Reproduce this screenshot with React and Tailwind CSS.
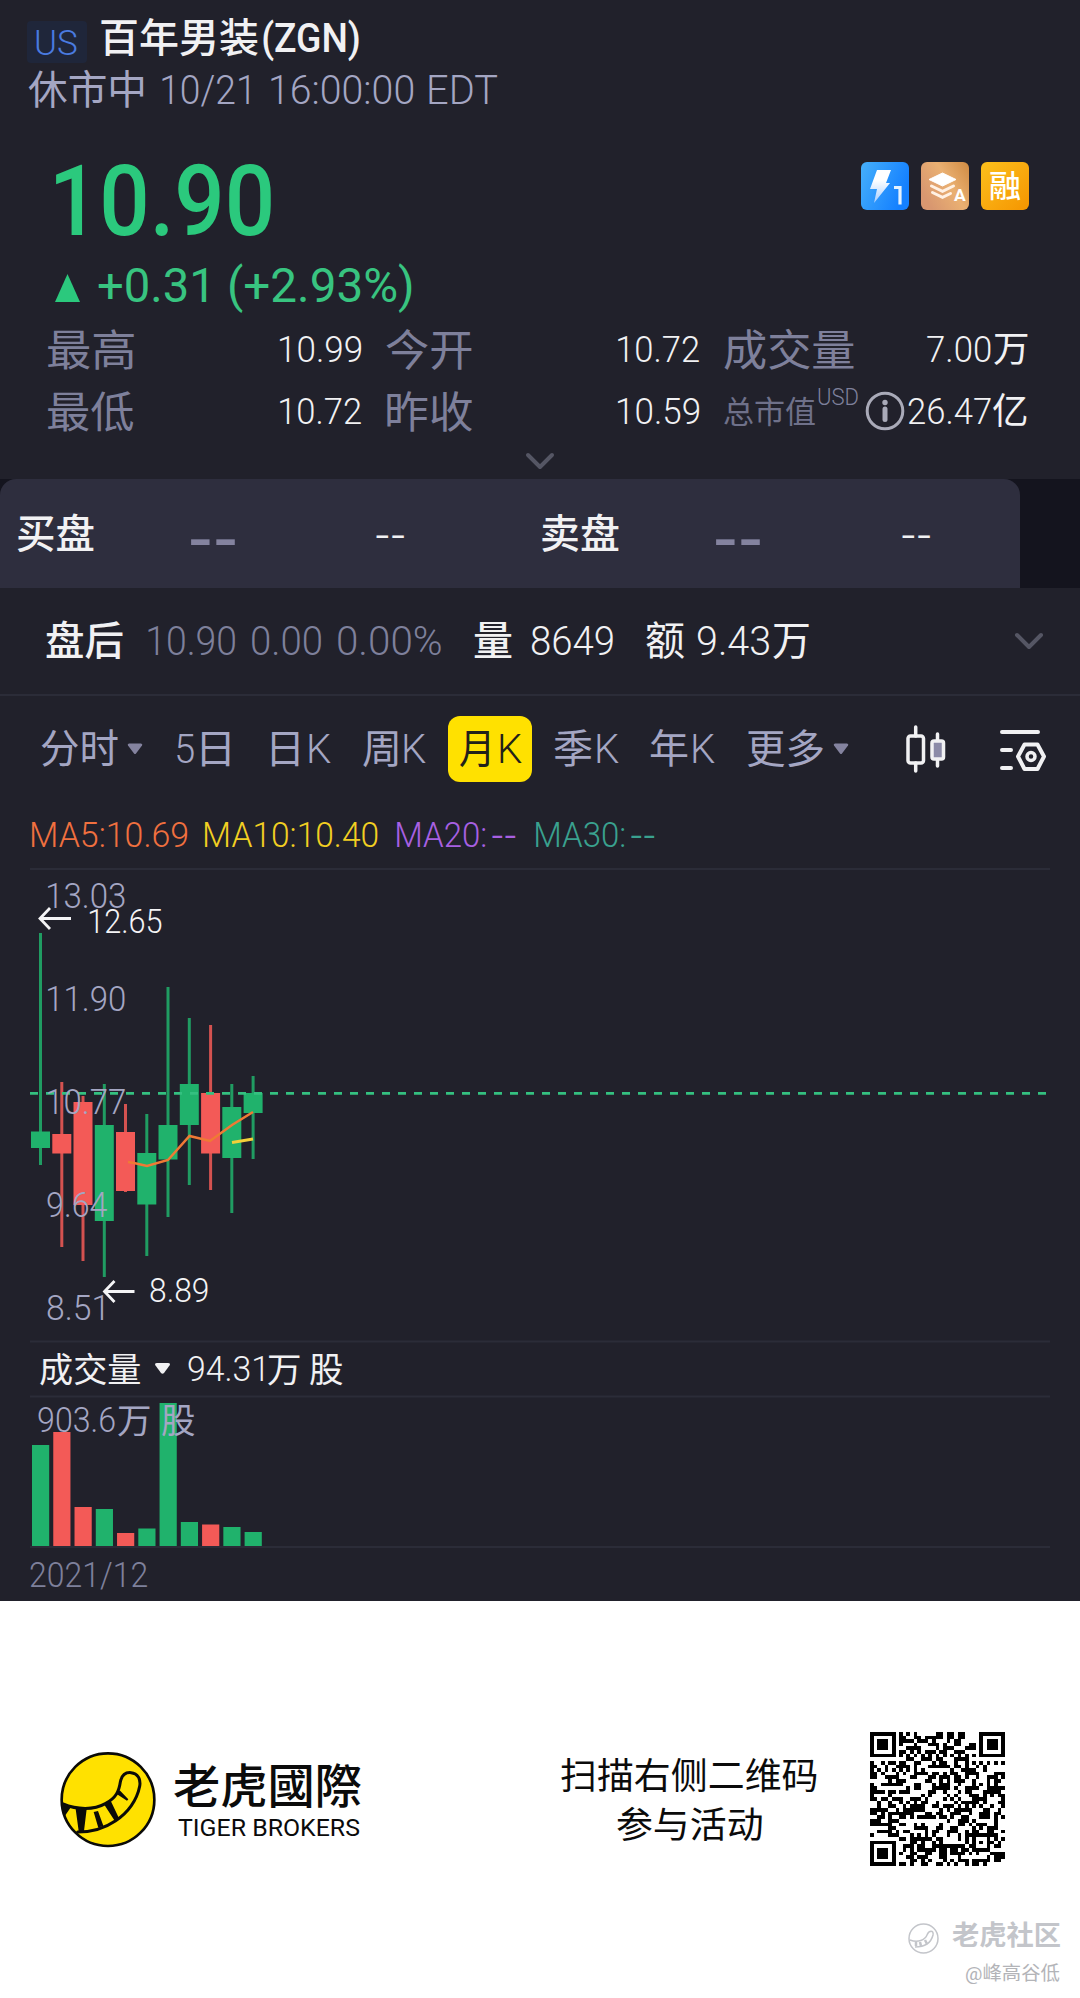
import { useLayoutEffect, useRef } from 'react';

let ctx;
const ink = (el, text) => {
  ctx = ctx || document.createElement('canvas').getContext('2d');
  const s = getComputedStyle(el);
  ctx.font = `${s.fontWeight} ${s.fontSize} ${s.fontFamily}`;
  const m = ctx.measureText(text);
  return { left: -m.actualBoundingBoxLeft, width: m.actualBoundingBoxLeft + m.actualBoundingBoxRight };
};

// Text condensed or stretched to the width of its box
function Fit({ className = '', children }) {
  const ref = useRef(null);
  useLayoutEffect(() => {
    const el = ref.current;
    const m = ink(el, children);
    const k = el.parentNode.offsetWidth / m.width;
    el.style.transform = `translateX(${-m.left * k}px) scaleX(${k})`;
  }, [children]);
  return (
    <span className={`block shrink-0 whitespace-pre leading-none ${className}`}>
      <span ref={ref} className="inline-block origin-left align-baseline">{children}</span>
    </span>
  );
}

// Same thing for labels inside a chart
function Label({ x, y, w, className, children }) {
  const ref = useRef(null);
  useLayoutEffect(() => {
    const el = ref.current;
    const m = ink(el, children);
    const k = w / m.width;
    el.setAttribute('transform', `translate(${x - m.left * k} ${y}) scale(${k} 1)`);
  }, [x, y, w, children]);
  return <text ref={ref} className={className}>{children}</text>;
}

const GREEN = '#20b26c';
const RED = '#f35a57';

// x, high, low, body top, body bottom, colour
const candles = [
  [40.5, 933, 1165, 1131.5, 1148, GREEN],
  [61.8, 1082, 1247, 1134, 1153.5, RED],
  [83, 1096, 1261, 1102, 1205, RED],
  [104.3, 1084, 1277, 1125, 1221, GREEN],
  [125.5, 1104, 1192, 1132, 1191, RED],
  [146.8, 1114, 1256, 1153, 1204.5, GREEN],
  [168, 987, 1217, 1125, 1159.5, GREEN],
  [189.3, 1018, 1185, 1084, 1125, GREEN],
  [210.6, 1025, 1190, 1093, 1153.5, RED],
  [231.8, 1084, 1213, 1107, 1158, GREEN],
  [253.1, 1076, 1159, 1093, 1113, GREEN],
];

const volumes = [1445, 1432, 1507, 1509, 1533, 1528.5, 1403, 1522, 1524.5, 1527, 1532];

function Chevron({ className }) {
  return (
    <svg className={className} width="32" height="20" viewBox="0 0 32 20" fill="none" stroke="#555664" strokeWidth="4" strokeLinecap="round" strokeLinejoin="round">
      <path d="M4 4l12 12L28 4" />
    </svg>
  );
}

function Caret({ className }) {
  return (
    <svg className={className} width="16" height="12" viewBox="0 0 16 12" fill="currentColor">
      <path d="M2 .5h12q2 .3 1 2L9 10.500q-1 1-2 0L1 2.500q-1-1.700 1-2z" />
    </svg>
  );
}

function Badges() {
  return (
    <div className="flex gap-3 mt-[9px]">
      <svg width="48" height="48" viewBox="0 0 48 48">
        <defs>
          <linearGradient id="blue" x1="0" y1="0" x2="1" y2=".4">
            <stop offset="0" stopColor="#46b0fb" />
            <stop offset="1" stopColor="#1480ff" />
          </linearGradient>
          <linearGradient id="bolt" x1="0" y1="0" x2="0" y2="1">
            <stop offset=".3" stopColor="#fff" />
            <stop offset="1" stopColor="#a5cdff" />
          </linearGradient>
        </defs>
        <rect width="48" height="48" rx="6" fill="url(#blue)" />
        <path d="M16 8h14l-5 13h4L13 41l3-14H9z" fill="url(#bolt)" />
        <path d="M33 25.500h6v17" fill="none" stroke="#e4f2ff" strokeWidth="3.200" />
      </svg>
      <svg width="48" height="48" viewBox="0 0 48 48">
        <defs>
          <linearGradient id="copper" x1="1" y1="0" x2="0" y2=".6">
            <stop offset="0" stopColor="#d08b42" />
            <stop offset=".5" stopColor="#eab072" />
            <stop offset="1" stopColor="#d89770" />
          </linearGradient>
        </defs>
        <rect width="48" height="48" rx="6" fill="url(#copper)" />
        <path d="M21.500 11L35 17.500 21.500 24 8 17.500z" fill="#fff" stroke="#fff" strokeLinejoin="round" />
        <path d="M10.500 24l11 5.300L32.500 24M11.500 30.500l10 4.800 8-3.800" fill="none" stroke="#fff1e4" strokeWidth="3" strokeLinecap="round" />
        <Label x={33} y={39} w={12} className="font-['Roboto'] font-bold text-[16px] fill-white">A</Label>
      </svg>
      <div className="w-12 h-12 rounded-md bg-linear-to-br from-[#fcc01b] to-[#f59500] flex justify-center pt-[9px]">
        <Fit className="w-[30px] h-8 text-[31px] font-medium text-white">融</Fit>
      </div>
    </div>
  );
}

function Header() {
  return (
    <header>
      <div className="flex h-[64px] pl-[27px]">
        <div className="mt-[21px] w-[60px] h-[42px] rounded bg-[#1f263a] pl-[9px] pt-[5px]">
          <Fit className="w-[41px] text-[35px] font-light text-[#4a7be0]">US</Fit>
        </div>
        <div className="flex items-baseline h-10 mt-[19px] text-[40px] font-medium text-[#f1f1f3]">
          <Fit className="ml-[14px] w-[157px]">百年男装</Fit>
          <Fit className="ml-[5px] w-[96px]">(ZGN)</Fit>
        </div>
      </div>
      <div className="flex items-baseline h-[59px] pt-[7px] pl-7 text-[40px] text-[#a4a6c3]">
        <Fit className="w-[116px]">休市中</Fit>
        <Fit className="ml-[18px] w-[87px] font-[350]">10/21</Fit>
        <Fit className="ml-[22px] w-[142px] font-[350]">16:00:00</Fit>
        <Fit className="ml-4 w-[68px] font-[350]">EDT</Fit>
      </div>
    </header>
  );
}

function Quote() {
  return (
    <section className="pt-[30px]">
      <div className="flex justify-between h-[109px] pl-14 pr-[51px]">
        <Fit className="w-[215px] text-[98px] font-medium text-[#2bc97d]">10.90</Fit>
        <Badges />
      </div>
      <div className="flex items-baseline h-16 pl-[55px] text-[48px] font-[450] text-[#38c480]">
        <svg width="25" height="28" viewBox="0 0 25 28" fill="#2bc97d"><path d="M12.500 0L25 28H0z" /></svg>
        <Fit className="ml-[18px] w-[109px]">+0.31</Fit>
        <Fit className="ml-[23px] w-[182px]">(+2.93%)</Fit>
      </div>
      <div className="flex h-[62px] pl-12 text-[36.500px] font-[350] text-[#f1f1f3]">
        <Fit className="mt-1 w-[86px] text-[43.500px] font-normal text-[#7e809b]">最高</Fit>
        <Fit className="mt-[6px] ml-[146px] w-[81px]">10.99</Fit>
        <Fit className="mt-1 ml-[25px] w-[86px] text-[43.500px] font-normal text-[#7e809b]">今开</Fit>
        <Fit className="mt-[6px] ml-[146px] w-[81px]">10.72</Fit>
        <Fit className="mt-1 ml-[25px] w-[130px] text-[43.500px] font-normal text-[#7e809b]">成交量</Fit>
        <Fit className="mt-[6px] ml-[73px] w-[64px]">7.00</Fit>
        <Fit className="mt-[6px] ml-[3px] w-[34px] font-normal">万</Fit>
      </div>
      <div className="flex h-[62px] pl-12 text-[36.500px] font-[350] text-[#f1f1f3]">
        <Fit className="mt-1 w-[86px] text-[43.500px] font-normal text-[#7e809b]">最低</Fit>
        <Fit className="mt-[6px] ml-[146px] w-[81px]">10.72</Fit>
        <Fit className="mt-1 ml-[26px] w-[85px] text-[43.500px] font-normal text-[#7e809b]">昨收</Fit>
        <Fit className="mt-[6px] ml-[146px] w-[81px]">10.59</Fit>
        <Fit className="mt-[9px] ml-[25px] w-[91px] text-[31px] font-normal text-[#6f718a]">总市值</Fit>
        <Fit className="-mt-[2px] ml-[3px] w-[40px] text-[23px] text-[#7e809b]">USD</Fit>
        <svg className="mt-[3px] ml-[7px]" width="40" height="40" viewBox="0 0 40 40" fill="none" stroke="#a9aab8">
          <circle cx="20" cy="20" r="17.800" strokeWidth="3" />
          <path d="M20 18v10.500" strokeWidth="5" strokeLinecap="round" />
          <circle cx="20" cy="11.500" r="2.700" fill="#a9aab8" stroke="none" />
        </svg>
        <Fit className="mt-[6px] ml-[3px] w-[83px]">26.47</Fit>
        <Fit className="mt-[6px] ml-[2px] w-[34px] font-normal">亿</Fit>
      </div>
      <div className="flex justify-center h-[29px] pt-[1px]"><Chevron /></div>
    </section>
  );
}

function OrderBook() {
  return (
    <section className="bg-[#14141e]">
      <div className="flex w-[1020px] h-[109px] rounded-t-2xl bg-[#2e2e3e] pl-[17px] text-[#f1f1f3]">
        <Fit className="mt-[36px] w-[77px] text-[40px] font-medium">买盘</Fit>
        <Fit className="mt-[21px] ml-[97px] w-[44px] text-[72px] font-['Liberation_Sans'] text-[#84839f]">--</Fit>
        <Fit className="mt-[38px] ml-[141px] w-[28px] text-[34px] font-['Liberation_Sans']">--</Fit>
        <Fit className="mt-[36px] ml-[138px] w-[77px] text-[40px] font-medium">卖盘</Fit>
        <Fit className="mt-[21px] ml-[97px] w-[44px] text-[72px] font-['Liberation_Sans'] text-[#84839f]">--</Fit>
        <Fit className="mt-[38px] ml-[142px] w-[28px] text-[34px] font-['Liberation_Sans']">--</Fit>
      </div>
    </section>
  );
}

function AfterHours() {
  return (
    <section className="flex items-start h-[108px] pt-[34px] pl-[46px] border-b-2 border-[#2b2c38] text-[40px] text-[#f1f1f3]">
      <Fit className="w-[77px] font-medium">盘后</Fit>
      <Fit className="ml-[25px] w-[87px] font-[350] text-[#7e809b]">10.90</Fit>
      <Fit className="ml-[17px] w-[69px] font-[350] text-[#7e809b]">0.00</Fit>
      <Fit className="ml-[17px] w-[103px] font-[350] text-[#7e809b]">0.00%</Fit>
      <Fit className="ml-[33px] w-[38px] font-medium">量</Fit>
      <Fit className="ml-[20px] w-[81px] font-[350]">8649</Fit>
      <Fit className="ml-[33px] w-[38px]">额</Fit>
      <Fit className="ml-[14px] w-[71px] font-[350]">9.43</Fit>
      <Fit className="ml-[4px] w-[36px]">万</Fit>
      <Chevron className="ml-[204px] mt-[9px]" />
    </section>
  );
}

function Tabs() {
  return (
    <nav className="flex items-start h-[93px] pt-[20px] pl-[41px] text-[40px] text-[#a4a6c3]">
      <Fit className="mt-[14px] w-[77px]">分时</Fit>
      <Caret className="mt-[27px] ml-[9px] text-[#84839f]" />
      <Fit className="mt-[14px] ml-[34px] w-[17px] font-[350]">5</Fit>
      <Fit className="mt-[14px] ml-[8px] w-[28px]">日</Fit>
      <Fit className="mt-[14px] ml-[42px] w-[27px]">日</Fit>
      <Fit className="mt-[14px] ml-[10px] w-[22px] font-[350]">K</Fit>
      <Fit className="mt-[14px] ml-[32px] w-[35px]">周</Fit>
      <Fit className="mt-[14px] ml-[6px] w-[22px] font-[350]">K</Fit>
      <div className="flex w-[84px] h-[66px] ml-[22px] pl-[12px] pt-[14px] rounded-xl bg-[#ffe100] text-[#22211a]">
        <Fit className="w-[29px]">月</Fit>
        <Fit className="ml-[11px] w-[22px] font-[350]">K</Fit>
      </div>
      <Fit className="mt-[14px] ml-[22px] w-[38px]">季</Fit>
      <Fit className="mt-[14px] ml-[5px] w-[22px] font-[350]">K</Fit>
      <Fit className="mt-[14px] ml-[31px] w-[38px]">年</Fit>
      <Fit className="mt-[14px] ml-[5px] w-[22px] font-[350]">K</Fit>
      <Fit className="mt-[14px] ml-[32px] w-[76px]">更多</Fit>
      <Caret className="mt-[27px] ml-[10px] text-[#84839f]" />
      <svg className="ml-[57px] mt-[9px]" width="40" height="48" viewBox="0 0 40 48" fill="none" stroke="#f1f1f3" strokeWidth="3.500" strokeLinecap="round">
        <rect x="2" y="11" width="15.500" height="27" rx="2.500" />
        <path d="M9.700 2v9M9.700 38v8M31.500 9v7M31.500 34v7" />
        <rect x="26" y="16" width="11.500" height="18" rx="2" fill="#8c8ba8" />
      </svg>
      <svg className="ml-[54px] mt-[13px]" width="46" height="44" viewBox="0 0 46 44" fill="none" stroke="#f1f1f3" strokeWidth="4" strokeLinecap="round" strokeLinejoin="round">
        <path d="M2 3h36M2 21h9M2 39h9" />
        <path d="M24.500 15.500h13l6.500 12-6.500 12.500h-13l-6.500-12.500z" />
        <circle cx="31" cy="27.500" r="4" strokeWidth="3.500" />
      </svg>
    </nav>
  );
}

function Averages() {
  return (
    <div className="flex h-[79px] pt-[29px] pl-8 text-[34.500px] font-[350]">
      <Fit className="w-[155px] text-[#f0703f]">MA5:10.69</Fit>
      <Fit className="ml-[18px] w-[173px] text-[#f2cf22]">MA10:10.40</Fit>
      <Fit className="ml-[19px] w-[89px] text-[#a860e2]">MA20:</Fit>
      <Fit className="mt-[3px] ml-[6px] w-[24px] text-[29px] font-['Liberation_Sans'] text-[#a860e2]">--</Fit>
      <Fit className="ml-[20px] w-[89px] text-[#3aa18f]">MA30:</Fit>
      <Fit className="mt-[3px] ml-[6px] w-[24px] text-[29px] font-['Liberation_Sans'] text-[#3aa18f]">--</Fit>
    </div>
  );
}

function Charts() {
  return (
    <svg className="block" width="1080" height="733" viewBox="0 868 1080 733" fontFamily="Roboto, 'Noto Sans CJK SC', sans-serif">
      <path d="M30 869h1020M30 1341.500h1020M30 1396.500h1020M30 1547h1020" stroke="#2b2c38" strokeWidth="2" />
      {candles.map(([x, high, low, top, bottom, color]) => (
        <g key={x} fill={color}>
          <rect x={x - 1.5} y={high} width="3" height={low - high} opacity=".85" />
          <rect x={x - 9.5} y={top} width="19" height={bottom - top} />
        </g>
      ))}
      <path d="M30 1093.300h1018" stroke="#34c080" strokeWidth="2.800" strokeDasharray="8 8" />
      <polyline points="128,1162 134,1163 147,1166 168,1160 189.500,1136 210,1141 232,1125 253,1112" fill="none" stroke="#ef7a35" strokeWidth="2.500" />
      <path d="M232 1142.500L253 1139" stroke="#f3cf3a" strokeWidth="3" />

      <g className="text-[35px] font-[350]" fill="#a4a6c3">
        <Label x={48} y={907.7} w={77}>13.03</Label>
        <Label x={48} y={1010.7} w={77}>11.90</Label>
        <Label x={48} y={1113.7} w={77}>10.77</Label>
        <Label x={47} y={1216.7} w={60}>9.64</Label>
        <Label x={47} y={1319.7} w={56}>8.51</Label>
      </g>
      <g className="text-[33.500px] font-[350]" fill="#f4f4f6">
        <Label x={89} y={933} w={73}>12.65</Label>
        <Label x={150} y={1302} w={58}>8.89</Label>
      </g>
      <g fill="none" stroke="#f4f4f6" strokeWidth="2.800">
        <path d="M71 918.500H40M50 908l-10 10.500 10 10.500" />
        <path d="M134.500 1291.500h-30M114.500 1281l-10 10.500 10 10.500" />
      </g>

      {volumes.map((top, i) => (
        <rect key={i} x={32 + i * 21.26} y={top} width="17.200" height={1546 - top} fill={candles[i][5]} />
      ))}
      <g className="text-[34.500px]" fill="#f1f1f3">
        <Label x={40} y={1381.5} w={100}>成交量</Label>
        <path d="M157 1363h11q3 .3 1.500 2.500l-5.500 7.500q-1.500 1.500-3 0l-5.500-7.500q-1.500-2.200 1.500-2.500z" />
        <Label x={188} y={1381} w={75} className="font-[350]">94.31</Label>
        <Label x={268} y={1381.5} w={32}>万</Label>
        <Label x={310} y={1381.5} w={33}>股</Label>
      </g>
      <g className="text-[34.500px]" fill="#a4a6c3">
        <Label x={38} y={1432} w={77} className="font-[350]">903.6</Label>
        <Label x={118} y={1432.5} w={32}>万</Label>
        <Label x={162} y={1432.5} w={33}>股</Label>
      </g>
      <Label x={30} y={1587} w={117} className="text-[35px] font-[350] fill-[#7e809b]">2021/12</Label>
    </svg>
  );
}

const QR = 37;

function qrPath() {
  let seed = 90217;
  let d = '';
  const ring = (r, c, size) => {
    const m = Math.max(Math.abs(r), Math.abs(c));
    return m <= size ? m : -1;
  };
  for (let y = 0; y < QR; y++) {
    for (let x = 0; x < QR; x++) {
      seed = (seed * 1103515245 + 12345) % 2147483648;
      let on = (seed >> 13) % 2 === 0;
      if (x === 6 || y === 6) on = (x + y) % 2 === 0;
      [[3, 3], [33, 3], [3, 33]].forEach(([cx, cy]) => {
        const m = ring(y - cy, x - cx, 4);
        if (m >= 0) on = m !== 2 && m !== 4;
      });
      const a = ring(y - 30, x - 30, 2);
      if (a >= 0) on = a !== 1;
      if (on) d += `M${x} ${y}h1v1h-1z`;
    }
  }
  return d;
}

function TigerLogo() {
  return (
    <svg width="96" height="96" viewBox="59 65 288 288">
      <circle cx="203" cy="208" r="139" fill="#ffe100" stroke="#0b0b08" strokeWidth="8" />
      <path d="M68 221C110 238 160 240 195 220C228 202 236 182 240 155C245 130 260 126 272 127C292 129 302 146 298 168C290 210 262 248 226 271C188 297 150 305 112 305" fill="none" stroke="#0b0b08" strokeWidth="9" strokeLinecap="round" />
      <path d="M64 215l28 15-18 26-9-10zM106 236h33l-8 66h-16zM160 245l13-3 16 44-15 6zM190 220l20-11 26 55-13 7zM228 190l10-10 26 27-4 4z" fill="#0b0b08" />
    </svg>
  );
}

function Footer() {
  return (
    <footer className="relative h-[397px] bg-white text-[#0b0b0b]">
      <div className="flex pt-[131px] pl-[60px]">
        <div className="mt-[20px]"><TigerLogo /></div>
        <div className="ml-[18px] mt-[31px] w-[187px]">
          <Fit className="w-[187px] h-[54px] text-[47px] font-medium">老虎國際</Fit>
          <Fit className="ml-1 w-[182px] text-[23.500px]">TIGER BROKERS</Fit>
        </div>
        <div className="ml-[200px] mt-[27px] w-[256px] flex flex-col items-center text-[36.500px]">
          <Fit className="w-[256px] h-[49px]">扫描右侧二维码</Fit>
          <Fit className="w-[145px]">参与活动</Fit>
        </div>
        <svg className="ml-[53px]" width="135" height="134" viewBox="0 0 37 37" preserveAspectRatio="none" shapeRendering="crispEdges">
          <path d={qrPath()} />
        </svg>
      </div>
      <div className="absolute right-5 bottom-[15px] flex flex-col items-end text-[#c3c5ca]">
        <div className="flex items-center gap-[13px]">
          <svg width="31" height="31" viewBox="0 0 31 31" fill="none" stroke="currentColor" strokeWidth="1.500">
            <circle cx="15.500" cy="15.500" r="14.500" />
            <path d="M2 17c8 3 15 0 17-5s7-5 6 0c-2 8-9 12-18 12" />
            <path d="M8 19v4M12 19l1 4M17 17l2 4" strokeWidth="2.500" />
          </svg>
          <Fit className="w-[108px] -mt-1 text-[27px] font-bold">老虎社区</Fit>
        </div>
        <Fit className="mt-[10px] w-[94px] text-[19px] text-[#b3b4b8]">@峰高谷低</Fit>
      </div>
    </footer>
  );
}

export default function App() {
  return (
    <main className="w-[1080px] h-[1998px] overflow-hidden bg-[#21212b] font-['Roboto','Noto_Sans_CJK_SC',sans-serif]">
      <Header />
      <Quote />
      <OrderBook />
      <AfterHours />
      <Tabs />
      <Averages />
      <Charts />
      <Footer />
    </main>
  );
}
